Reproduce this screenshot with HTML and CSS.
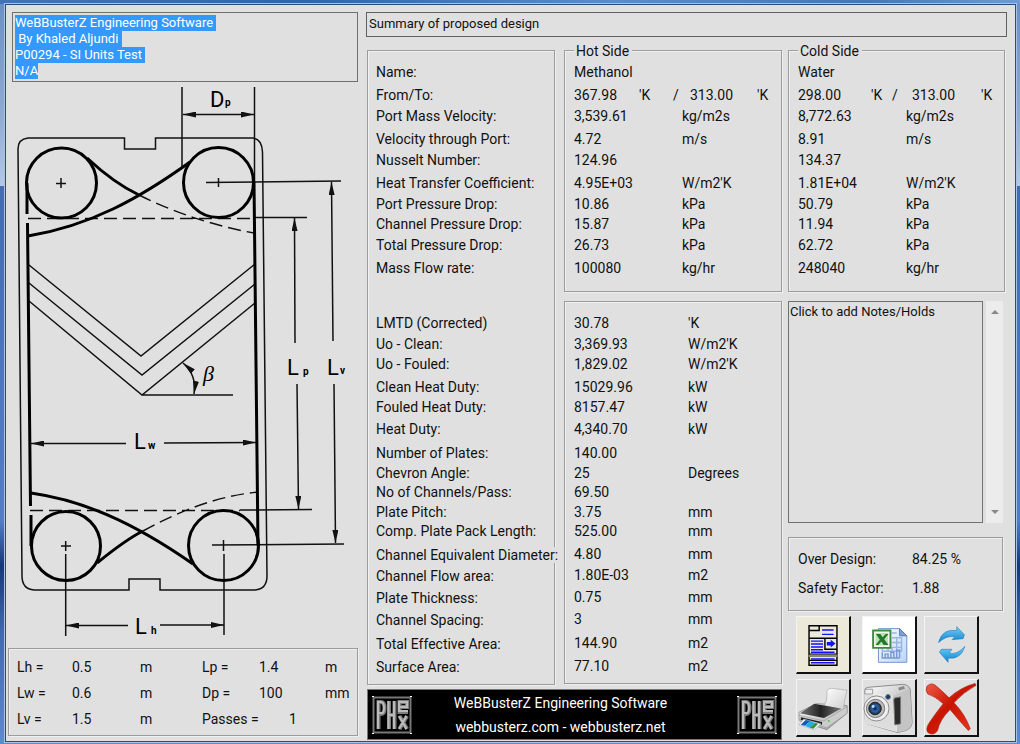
FILE: index.html
```html
<!DOCTYPE html>
<html lang="en">
<head>
<meta charset="utf-8">
<title>Summary of proposed design</title>
<link rel="stylesheet" href="styles.css">
</head>
<body>
<main class="app">
  <section class="left">
    <textarea class="project" id="project" aria-label="Project details" spellcheck="false" rows="4">WeBBusterZ Engineering Software
 By Khaled Aljundi
P00294 - SI Units Test
N/A</textarea>

    <svg class="plate" viewBox="8 82 350 566" role="img" aria-label="Plate dimensions diagram">
      <defs>
        <marker id="tip" viewBox="0 0 13 6" refX="13" refY="3" markerWidth="13" markerHeight="6" markerUnits="userSpaceOnUse" orient="auto-start-reverse"><path d="M0 0L13 3L0 6Z"/></marker>
      </defs>
      <g class="thin">
        <path d="M28 138H124.500V149H155.500V138H253Q262 139 262.500 152L267 576Q267 589 255 590H160V579H129V590H34Q22 589 22 576L18 149Q18 139 28 138Z"/>
        <path d="M182 87V168M254.500 87V182"/>
        <path d="M183 114.500H254" marker-start="url(#tip)" marker-end="url(#tip)"/>
        <path d="M56 183.500H66M61 178V188M206 182.500L341 181M218.500 178V187"/>
        <path d="M254 217.500H307M240 510L312 509.500M212 545L344 544"/>
        <g marker-end="url(#tip)">
          <path d="M295 343L294.500 218"/>
          <path d="M297 384L298.500 509"/>
          <path d="M333 341L331.500 182"/>
          <path d="M334 384L335.500 543"/>
          <path d="M126 443.500H31"/>
          <path d="M164 443L256 442.500"/>
          <path d="M128 625.500H66"/>
          <path d="M160 625H224"/>
        </g>
        <path d="M29 265L141 356L255 264M29 283L142 375L255 284M29 301L142 395L255 303M142 395H233"/>
        <path d="M183 363Q197 375 194 394" marker-start="url(#tip)" marker-end="url(#tip)"/>
        <path d="M61 546H71M65.700 541V551M65.700 554V636M223.500 540V551M224 554V635"/>
        <path class="dash" d="M28 218.500H254M30 510.500H240M139 195C175 213 215 226 254 233M143 531C185 508 220 496 258 492"/>
      </g>
      <g class="thick">
        <circle cx="61.500" cy="183" r="35"/>
        <circle cx="218.500" cy="182.500" r="35"/>
        <circle cx="66" cy="546" r="34.500"/>
        <circle cx="223.500" cy="545.500" r="35"/>
        <path d="M28 236C90 226 140 198 190 162M87 158C102 172 118 185 139 195M31 493C80 500 130 520 193 564M97 563C113 550 127 539 143 531"/>
        <path d="M27 183V214M27.500 223L30.500 506M31 515V546M254 182L258 546"/>
      </g>
      <g class="letters">
        <text x="210" y="107">D</text><text class="sub" x="225" y="106">p</text>
        <text x="134" y="449">L</text><text class="sub" x="148" y="449">w</text>
        <text x="135" y="634">L</text><text class="sub" x="151" y="634">h</text>
        <text x="287" y="375">L</text><text class="sub" x="303" y="375">p</text>
        <text x="327" y="375">L</text><text class="sub" x="340" y="374">v</text>
        <text class="beta" x="203" y="381">β</text>
      </g>
    </svg>

    <section class="frame dims">
      <table>
        <colgroup><col class="d1"><col class="d2"><col class="d3"><col class="d4"><col class="d5"><col></colgroup>
        <tr><th>Lh =</th><td>0.5</td><td>m</td><th>Lp =</th><td>1.4</td><td>m</td></tr>
        <tr><th>Lw =</th><td>0.6</td><td>m</td><th>Dp =</th><td>100</td><td>mm</td></tr>
        <tr><th>Lv =</th><td>1.5</td><td>m</td><td colspan="3"><span class="passes">Passes =</span>1</td></tr>
      </table>
    </section>
  </section>

  <section class="right">
    <input class="summary" type="text" value="Summary of proposed design" aria-label="Summary">
    <div class="main">
      <div class="measures">
        <section class="frame labels">
          <table>
            <tr class="r23"><th>Name:</th></tr>
            <tr class="r21"><th>From/To:</th></tr>
            <tr class="r23"><th>Port Mass Velocity:</th></tr>
            <tr class="r21"><th>Velocity through Port:</th></tr>
            <tr class="r23"><th>Nusselt Number:</th></tr>
            <tr class="r21"><th>Heat Transfer Coefficient:</th></tr>
            <tr class="r20"><th>Port Pressure Drop:</th></tr>
            <tr class="r21"><th>Channel Pressure Drop:</th></tr>
            <tr class="r23"><th>Total Pressure Drop:</th></tr>
            <tr class="break"><th>Mass Flow rate:</th></tr>
            <tr class="r21"><th>LMTD (Corrected)</th></tr>
            <tr class="r20"><th>Uo - Clean:</th></tr>
            <tr class="r23"><th>Uo - Fouled:</th></tr>
            <tr class="r20"><th>Clean Heat Duty:</th></tr>
            <tr class="r22"><th>Fouled Heat Duty:</th></tr>
            <tr class="r24"><th>Heat Duty:</th></tr>
            <tr class="r20"><th>Number of Plates:</th></tr>
            <tr class="r19"><th>Chevron Angle:</th></tr>
            <tr class="r20"><th>No of Channels/Pass:</th></tr>
            <tr class="r19"><th>Plate Pitch:</th></tr>
            <tr class="r24"><th>Comp. Plate Pack Length:</th></tr>
            <tr class="r21"><th><span class="cover">Channel Equivalent Diameter:</span></th></tr>
            <tr class="r22"><th>Channel Flow area:</th></tr>
            <tr class="r22"><th>Plate Thickness:</th></tr>
            <tr class="r24"><th>Channel Spacing:</th></tr>
            <tr class="r23"><th>Total Effective Area:</th></tr>
            <tr class="r20"><th>Surface Area:</th></tr>
          </table>
        </section>
        <div class="values">
          <fieldset class="frame side hot">
            <legend>Hot Side</legend>
            <table>
              <colgroup><col class="value"><col></colgroup>
              <tr class="r23"><td colspan="2">Methanol</td></tr>
              <tr class="r21"><td colspan="2"><div class="range"><span>367.98</span><span>'K</span><span>/</span><span>313.00</span><span>'K</span></div></td></tr>
              <tr class="r23"><td>3,539.61</td><td>kg/m2s</td></tr>
              <tr class="r21"><td>4.72</td><td>m/s</td></tr>
              <tr class="r23"><td>124.96</td><td></td></tr>
              <tr class="r21"><td>4.95E+03</td><td>W/m2'K</td></tr>
              <tr class="r20"><td>10.86</td><td>kPa</td></tr>
              <tr class="r21"><td>15.87</td><td>kPa</td></tr>
              <tr class="r23"><td>26.73</td><td>kPa</td></tr>
              <tr class="r20"><td>100080</td><td>kg/hr</td></tr>
            </table>
          </fieldset>
          <section class="frame results">
            <table>
              <colgroup><col class="result"><col></colgroup>
              <tr class="r21"><td>30.78</td><td>'K</td></tr>
              <tr class="r20"><td>3,369.93</td><td>W/m2'K</td></tr>
              <tr class="r23"><td>1,829.02</td><td>W/m2'K</td></tr>
              <tr class="r20"><td>15029.96</td><td>kW</td></tr>
              <tr class="r22"><td>8157.47</td><td>kW</td></tr>
              <tr class="r24"><td>4,340.70</td><td>kW</td></tr>
              <tr class="r20"><td>140.00</td><td></td></tr>
              <tr class="r19"><td>25</td><td>Degrees</td></tr>
              <tr class="r20"><td>69.50</td><td></td></tr>
              <tr class="r19"><td>3.75</td><td>mm</td></tr>
              <tr class="r23"><td>525.00</td><td>mm</td></tr>
              <tr class="r21"><td>4.80</td><td>mm</td></tr>
              <tr class="r22"><td>1.80E-03</td><td>m2</td></tr>
              <tr class="r22"><td>0.75</td><td>mm</td></tr>
              <tr class="r24"><td>3</td><td>mm</td></tr>
              <tr class="r23"><td>144.90</td><td>m2</td></tr>
              <tr class="r20"><td>77.10</td><td>m2</td></tr>
            </table>
          </section>
        </div>
        <footer class="banner">
          <svg class="logo" viewBox="0 0 40 40" aria-hidden="true"><use href="#phex"/></svg>
          <div class="credits"><p>WeBBusterZ Engineering Software</p><p>webbusterz.com - webbusterz.net</p></div>
          <svg class="logo" viewBox="0 0 40 40" role="img" aria-label="PHex">
            <g id="phex" fill="none">
              <path d="M1.500 2V38M38.500 2V38M1 2.500H39M1 37.500H39" stroke="#777" stroke-width="2"/>
              <path d="M0 1.500H2M38 1.500H40M0 38.500H2M38 38.500H40" stroke="#fff" stroke-width="1"/>
              <path d="M6.500 34V7H9Q12.500 7 12.500 13T9 19H7M17 6V34M22.500 6V34M17 20H22.500M27 12H35V7H27.500V17H36M27.500 21L35 34M35 21L27.500 34" stroke="#7d7d7d" stroke-width="4"/>
              <path d="M6 34V7H9Q12 7 12 13T9 18H7M16.500 6V34M22 6V34M17 20H22M27 12H35V7H27V16H36M27 21L34.500 34M34.500 21L27 34" stroke="#bbb" stroke-width="2"/>
            </g>
          </svg>
        </footer>
      </div>

      <div class="aside">
        <fieldset class="frame side cold">
          <legend>Cold Side</legend>
          <table>
            <colgroup><col class="value"><col></colgroup>
            <tr class="r23"><td colspan="2">Water</td></tr>
            <tr class="r21"><td colspan="2"><div class="range"><span>298.00</span><span>'K</span><span>/</span><span>313.00</span><span>'K</span></div></td></tr>
            <tr class="r23"><td>8,772.63</td><td>kg/m2s</td></tr>
            <tr class="r21"><td>8.91</td><td>m/s</td></tr>
            <tr class="r23"><td>134.37</td><td></td></tr>
            <tr class="r21"><td>1.81E+04</td><td>W/m2'K</td></tr>
            <tr class="r20"><td>50.79</td><td>kPa</td></tr>
            <tr class="r21"><td>11.94</td><td>kPa</td></tr>
            <tr class="r23"><td>62.72</td><td>kPa</td></tr>
            <tr class="r20"><td>248040</td><td>kg/hr</td></tr>
          </table>
        </fieldset>

        <div class="notes">
          <textarea aria-label="Notes" spellcheck="false">Click to add Notes/Holds</textarea>
          <div class="scroll" aria-hidden="true">
            <svg viewBox="0 0 10 6"><path d="M1 5L5 1L9 5Z"/></svg>
            <svg viewBox="0 0 10 6"><path d="M1 1L5 5L9 1Z"/></svg>
          </div>
        </div>

        <section class="frame factors">
          <table>
            <colgroup><col class="result"><col></colgroup>
            <tr><th>Over Design:</th><td>84.25 %</td></tr>
            <tr><th>Safety Factor:</th><td>1.88</td></tr>
          </table>
        </section>

        <div class="tools">
          <button class="tool cream" type="button" aria-label="Report">
            <svg viewBox="0 0 54 56"><g fill="#ece9d8" stroke="#000" stroke-width="1.500"><path d="M12.500 8.500H41.500V49.500H12.500ZM12.500 21.500H41.500M12.500 13.500H23V8.500M29 22V33H41.500M12.500 38H41.500M12.500 44.500H41.500"/></g><path d="M12 38.500H42V41H12Z" fill="#888870"/><path d="M26 13H38M26 17.500H38M14.500 24.500H27M14.500 27.500H27M14.500 30.500H27M14.500 33.500H27M14.500 36H39M14.500 43H39M14.500 47H39" stroke="#11f" stroke-width="1.500"/><path d="M31 25.500H35V23L40 27L35 31V29H31Z" fill="#11f"/></svg>
          </button>
          <button class="tool white" type="button" aria-label="Export to Excel">
            <svg viewBox="0 0 54 56"><defs><linearGradient id="sheet" x2="1" y2="1"><stop stop-color="#fff"/><stop offset="1" stop-color="#b9d5f7"/></linearGradient></defs><path d="M16 11.500H38L45.500 19V46.500H16Z" fill="url(#sheet)" stroke="#6f91cd"/><path d="M38 11.500L45.500 19H38Z" fill="#7f9fd4" stroke="#5577b8"/><path d="M30 16H35M30 21H40V31M20 35H40V31H20V35M30 26H40M35 21V35M26 31V35M30 31V35" fill="none" stroke="#9ab4e4" stroke-width="1.500"/><path d="M20 36V42H38M23 42V38H26V42M29 42V36H32V42M35 42V34H38V42" fill="none" stroke="#7896d4" stroke-width="1.500"/><path d="M10.500 13.500H28.500V31.500H10.500Z" fill="#f8fcf6" stroke="#3f8b3d" stroke-width="2"/><path d="M13 16H26V29H13Z" fill="#bfe0b5"/><path d="M13.500 17H18L20.500 20.500L23.500 17H26.500L22 22.500L26.500 28.500H21.500L19 25L16 28.500H13L17.500 23Z" fill="#217b2d"/></svg>
          </button>
          <button class="tool" type="button" aria-label="Refresh">
            <svg viewBox="0 0 54 56"><defs><linearGradient id="aqua" x2="0" y2="1"><stop stop-color="#6fd0f8"/><stop offset="1" stop-color="#1280d2"/></linearGradient></defs><g fill="url(#aqua)" stroke="#187fb8" stroke-width=".6"><path d="M14 26Q18 11 33 13.500V9.500L41 18L39.500 22L28 23L31 20Q23 18 14 26Z"/><path d="M41.500 30Q37 44 24 42V46.500L15 36L17 33L28 33L25 37Q33 39 41.500 30Z"/></g></svg>
          </button>
          <button class="tool" type="button" aria-label="Print">
            <svg viewBox="0 0 54 56"><defs><linearGradient id="steel" x2="1" y2="1"><stop stop-color="#fff"/><stop offset="1" stop-color="#999"/></linearGradient><linearGradient id="paper" x2="1" y2="1"><stop stop-color="#fff"/><stop offset="1" stop-color="#ccc"/></linearGradient><linearGradient id="tray"><stop stop-color="#777"/><stop offset=".5" stop-color="#222"/><stop offset="1" stop-color="#777"/></linearGradient></defs><path d="M2 33L20 24L52 26V34L31 51L3 42Z" fill="url(#steel)" stroke="#777" stroke-width=".7"/><path d="M28 26Q32 20 31 11Q32 8 36 8L52 10Q49 20 48 31Z" fill="url(#paper)" stroke="#aaa" stroke-width=".7"/><path d="M3 34L18 24L46 29L28 39Z" fill="url(#tray)"/><path d="M2 36L28 42L52 27V34L31 49L2 40Z" fill="#ccc" stroke="#888" stroke-width=".5"/><path d="M4 38L26 43V46L4 41Z" fill="#222"/><path d="M7 40L25 45L18 51L2 46Z" fill="#eef8ff" stroke="#999" stroke-width=".5"/><path d="M9 41L14 42L8 47L4 46Z" fill="#1558b8"/><path d="M14 42L19 44L13 49L8 47Z" fill="#22b0e0"/><path d="M19 44L22 45L17 50L13 49Z" fill="#3a8d3e"/><circle cx="33" cy="42" r="1" fill="#5b5"/></svg>
          </button>
          <button class="tool" type="button" aria-label="Snapshot">
            <svg viewBox="0 0 54 56"><defs><radialGradient id="lens"><stop stop-color="#071a3c"/><stop offset=".5" stop-color="#2c65ad"/><stop offset="1" stop-color="#1a2535"/></radialGradient></defs><path d="M2 10Q2 7 6 7L41 4Q47 4 49 9L51 44Q50 50 44 52L36 54L5 45Q2 43 2 39Z" fill="url(#steel)" stroke="#888"/><path d="M2 14L30 16Q34 17 34 22L35 53L5 45Q2 43 2 39Z" fill="#ddd" stroke="#f6f6f6" stroke-width=".7"/><path d="M31 16L47 9Q49 9 49 14L51 44Q50 49 44 52L36 54Z" fill="#c4c4c4"/><path d="M32 20Q32 18 34 18L39 17V45L33 46Z" fill="#2b2b2b" stroke="#777"/><circle cx="14" cy="29" r="13" fill="#eee" stroke="#888"/><circle cx="13" cy="29" r="9.500" fill="#bbb" stroke="#777"/><circle cx="12.500" cy="29" r="6.500" fill="url(#lens)" stroke="#222"/><circle cx="10.500" cy="27" r="1.500" fill="#bde0ff"/><circle cx="26" cy="17" r="2.500" fill="#123a72" stroke="#777"/><path d="M2 9H10V14H2Z" fill="#eee" stroke="#999"/><path d="M37 9L43 7" stroke="#888" stroke-width="3"/></svg>
          </button>
          <button class="tool" type="button" aria-label="Close">
            <svg viewBox="0 0 54 56"><defs><linearGradient id="red" x2="1" y2="1"><stop stop-color="#f05a48"/><stop offset=".45" stop-color="#c81400"/><stop offset="1" stop-color="#ee3826"/></linearGradient></defs><path d="M2 6Q7 1 12 6Q19 12 25 18Q37 7 52 3L53 5Q40 12 30 23Q41 34 47 50L45 52Q36 42 26 30Q15 41 13 52Q9 58 3 54Q0 50 5 43Q11 34 19 24Q10 16 3 14Q0 10 2 6Z" fill="url(#red)" stroke="#a52014" stroke-width=".7"/></svg>
          </button>
        </div>
      </div>
    </div>
  </section>
</main>
<script src="app.js"></script>
</body>
</html>
```
FILE: styles.css
```css
* { box-sizing: border-box; }

body {
  margin: 0;
  min-height: 100vh;
  padding: 4px 4px 2px 5px;
  background: linear-gradient(90deg, #4474b8, #2f65ae 30%, #5b8bcd 60%, #4676b8 85%, #6f9ad4) top / 100% 4px no-repeat,
    linear-gradient(#6c8fc6, #8fa9d0 15%, #b4c8e6 25%, #3f6eb2 25%, #4f80c6 70%, #123a78 76%, #3c6cae 85%, #5b8ccf);
  color: #111;
  font: 14px/18px Roboto, "Liberation Sans", sans-serif;
}

.app {
  display: grid;
  grid-template-columns: 350fr 641fr;
  gap: 8px;
  padding: 7px 8px 1px 2px;
  border: 1px solid #2c4a7c;
  background: #e0e0e0;
  box-shadow: 0 0 0 1px #a9c3e6;
}

textarea,
input,
button { font: inherit; color: inherit; margin: 0; border-radius: 0; }
textarea,
.summary { font-size: 13px; }
textarea { display: block; resize: none; overflow: hidden; outline: none; }

table { width: 100%; border-collapse: collapse; table-layout: fixed; }
th, td { padding: 0; font-weight: 400; text-align: left; vertical-align: top; white-space: nowrap; }

.frame {
  min-width: 0;
  margin: 0;
  border: 1px solid #9c9c9c;
  box-shadow: 1px 1px 0 #f0f0f0, inset 1px 1px 0 #f0f0f0;
}

.left { min-width: 0; }
.project {
  width: calc(100% - 4px);
  height: 70px;
  margin-left: 4px;
  padding: 2px;
  border: 1px solid #707070;
  background: #e0e0e0;
  line-height: 16px;
}
.project::selection { background: #3399ff; color: #fff; }

.plate { display: block; width: 100%; height: auto; }
.thin, .thick { fill: none; stroke: #111; stroke-width: 1.5; }
.thick { stroke: #000; stroke-width: 3; }
.dash { stroke-dasharray: 13 6; }
marker path { fill: #111; stroke: none; }
.letters { font-size: 22px; font-weight: 400; }
.sub { font-size: 10px; font-weight: 700; }
.beta { font: italic 22px "Liberation Serif", serif; }

.dims { height: 88px; padding: 9px 8px 0; }
.dims tr { height: 26px; }
.d1 { width: 55px; }
.d2 { width: 68px; }
.d3 { width: 62px; }
.d4 { width: 57px; }
.d5 { width: 66px; }
.passes { display: inline-block; width: 87px; }

.right { display: flex; flex-direction: column; min-width: 0; }
.summary {
  width: 100%;
  height: 25px;
  padding: 0 2px 2px;
  border: 1px solid #606060;
  background: #e0e0e0;
}
.main {
  display: grid;
  grid-template-columns: 415fr 217fr;
  gap: 6px;
  margin-top: 5px;
  padding: 0 2px 0 1px;
}
.measures {
  display: grid;
  grid-template-columns: 188fr 218fr;
  column-gap: 9px;
  align-content: start;
}

.labels { margin-top: 8px; padding: 12px 0 6px 8px; }
.cover { background: #e0e0e0; }
.r19 { height: 19px; }
.r20 { height: 20px; }
.r21 { height: 21px; }
.r22 { height: 22px; }
.r23 { height: 23px; }
.r24 { height: 24px; }
.break { height: 55px; }

.side { padding: 4px 0 12px 9px; }
.side legend { height: 17px; margin-left: 0; padding: 0 3px 0 2px; background: #e0e0e0; }
.value { width: 108px; }
.result { width: 114px; }
.range { display: grid; }
.hot .range { grid-template-columns: 65px 34px 17px 67px auto; }
.cold .range { grid-template-columns: 73px 21px 20px 69px auto; }
.results { margin-top: 9px; padding: 12px 0 6px 9px; }

.banner {
  grid-column: 1 / -1;
  display: flex;
  align-items: center;
  justify-content: space-between;
  height: 51px;
  margin-top: 4px;
  padding: 0 4px;
  border: 1px solid #777;
  background: #000;
  color: #fff;
}
.logo { width: 40px; height: 40px; }
.credits { padding-right: 28px; text-align: center; line-height: 24px; }
.credits p { margin: 0; }

.notes { display: flex; gap: 3px; height: 222px; margin-top: 9px; padding-right: 2px; }
.notes textarea {
  flex: 1;
  min-width: 0;
  padding: 1px;
  border: 1px solid #707070;
  background: #e0e0e0;
}
.scroll {
  display: flex;
  flex-direction: column;
  justify-content: space-between;
  align-items: center;
  width: 17px;
  padding: 8px 0;
  background: #ececec;
}
.scroll svg { width: 10px; height: 6px; fill: #888; }

.factors { height: 74px; margin: 14px 2px 0 0; padding: 12px 0 0 9px; }
.factors tr { height: 29px; }

.tools { display: grid; grid-template-columns: 66px 62px 55px; gap: 5px 0; margin: 5px 0 0 8px; }
.tool {
  width: 55px;
  height: 58px;
  padding: 0;
  border: solid;
  border-width: 1px 2px 2px 1px;
  border-color: #f4f4f4 #111 #111 #f4f4f4;
  background: #e0e0e0;
}
.tool svg { display: block; width: 100%; height: 100%; }
.cream { background: #ece9d8; }
.white { background: #fff; }
```
FILE: app.js
```js
// The project details start out selected, ready to be replaced.
const project = document.getElementById("project");
project.focus();
project.select();
```
